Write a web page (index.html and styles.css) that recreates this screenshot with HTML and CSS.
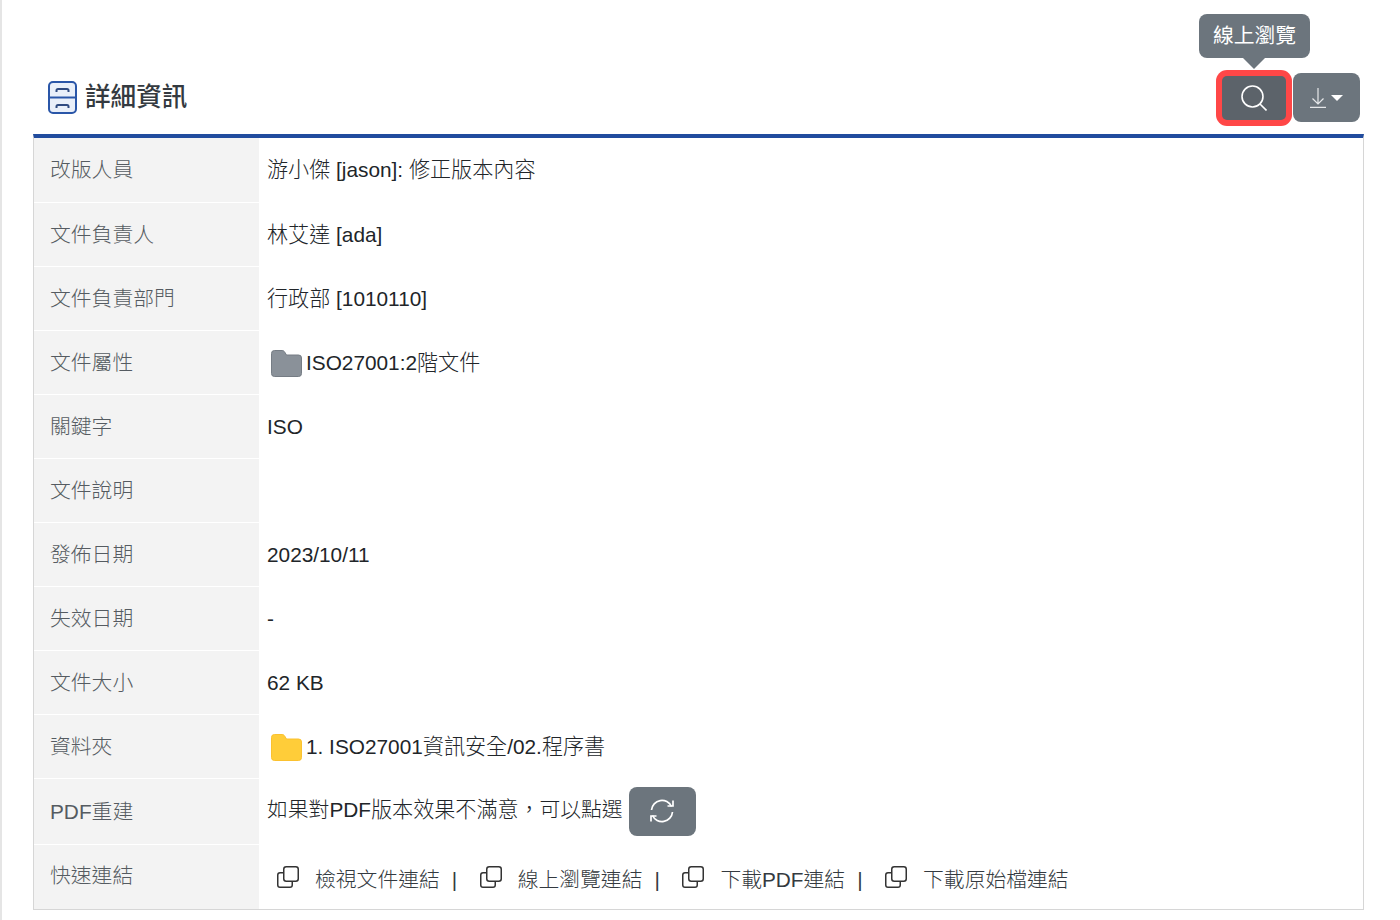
FILE: index.html
```html
<!DOCTYPE html>
<html lang="zh-Hant">
<head>
<meta charset="utf-8">
<title>詳細資訊</title>
<link rel="stylesheet" href="styles.css">
</head>
<body>
<div class="page">
  <header class="head">
    <h2 class="title">
      <svg class="title-icon" viewBox="0 0 29 33" width="29" height="33" fill="none" stroke="#2a56a8" stroke-width="2">
        <rect x="1" y="1" width="27" height="31" rx="4" fill="#e9eff9"/>
        <path d="M1 16.500h27"/>
        <path d="M8.500 11V9.500A1.500 1.500 0 0 1 10 8h9a1.500 1.500 0 0 1 1.500 1.500V11M8.500 27v-1.500A1.500 1.500 0 0 1 10 24h9a1.500 1.500 0 0 1 1.500 1.500V27" stroke="#2f4a80"/>
      </svg>
      <span>詳細資訊</span>
    </h2>
    <div class="actions">
      <div class="focus-wrap">
        <div class="tooltip">線上瀏覽</div>
        <button class="btn btn-active" type="button" aria-label="線上瀏覽">
          <svg viewBox="0 0 26 26" width="26" height="26" fill="none" stroke="#fff" stroke-width="1.600"><circle cx="11.500" cy="11.500" r="10.500"/><path d="M19 19l6.500 6.500"/></svg>
        </button>
      </div>
      <button class="btn btn-dl" type="button" aria-label="下載">
        <svg viewBox="0 0 16 20" width="16" height="20" fill="none" stroke="#e6e8ea" stroke-width="1.200"><path d="M8 0v15.500M2.500 10.500L8 16l5.500-5.500M0 19.400h16"/></svg>
        <span class="caret"></span>
      </button>
    </div>
  </header>
  <table class="info">
    <tbody>
      <tr class="row-first"><th>改版人員</th><td><span class="zh">游小傑</span> [jason]: <span class="zh">修正版本內容</span></td></tr>
      <tr><th>文件負責人</th><td><span class="zh">林艾達</span> [ada]</td></tr>
      <tr><th>文件負責部門</th><td><span class="zh">行政部</span> [1010110]</td></tr>
      <tr><th>文件屬性</th><td><div class="folder-row">
        <svg class="folder" viewBox="0 0 32 27" width="31" height="27" preserveAspectRatio="none"><path d="M.5 3.500a3 3 0 0 1 3-3h8a3 3 0 0 1 2.400 1.200L16 5h12.500a3 3 0 0 1 3 3v15.500a3 3 0 0 1-3 3h-25a3 3 0 0 1-3-3z" fill="#8a9199" stroke="#747b83"/></svg><span>ISO27001:2<span class="zh">階文件</span></span></div></td></tr>
      <tr><th>關鍵字</th><td>ISO</td></tr>
      <tr><th>文件說明</th><td></td></tr>
      <tr><th>發佈日期</th><td>2023/10/11</td></tr>
      <tr><th>失效日期</th><td>-</td></tr>
      <tr><th>文件大小</th><td>62 KB</td></tr>
      <tr><th>資料夾</th><td><div class="folder-row">
        <svg class="folder" viewBox="0 0 32 27" width="31" height="27" preserveAspectRatio="none"><path d="M.5 3.500a3 3 0 0 1 3-3h8a3 3 0 0 1 2.400 1.200L16 5h12.500a3 3 0 0 1 3 3v15.500a3 3 0 0 1-3 3h-25a3 3 0 0 1-3-3z" fill="#ffcd39" stroke="#fbc02d"/></svg><span>1. ISO27001<span class="zh">資訊安全</span>/02.<span class="zh">程序書</span></span></div></td></tr>
      <tr class="row-rebuild"><th>PDF重建</th><td><div class="rebuild">
        <span class="rebuild-text">如果對PDF<span class="zh">版本效果不滿意</span>，可以點選</span>
        <button class="btn btn-refresh" type="button" aria-label="重建">
          <svg viewBox="0 0 24 24" width="24" height="24" fill="none" stroke="#fff" stroke-width="1.700"><path d="M1.500 11A10.500 10.500 0 0 1 21.500 7.500"/><path d="M23 1.500V7h-5.500"/><path d="M22.500 13A10.500 10.500 0 0 1 2.500 16.500"/><path d="M1 22.500V17h5.500"/></svg>
        </button>
      </div></td></tr>
      <tr class="row-links"><th>快速連結</th><td><div class="links">
        <a class="link"><svg class="copy" viewBox="0 0 22 22" width="22" height="22"><use href="#copy"/></svg><span>檢視文件連結</span></a><i class="sep">|</i>
        <a class="link"><svg class="copy" viewBox="0 0 22 22" width="22" height="22"><use href="#copy"/></svg><span>線上瀏覽連結</span></a><i class="sep">|</i>
        <a class="link"><svg class="copy" viewBox="0 0 22 22" width="22" height="22"><use href="#copy"/></svg><span>下載PDF連結</span></a><i class="sep">|</i>
        <a class="link"><svg class="copy" viewBox="0 0 22 22" width="22" height="22"><use href="#copy"/></svg><span>下載原始檔連結</span></a>
      </div></td></tr>
    </tbody>
  </table>
</div>
<svg class="defs" width="0" height="0">
  <defs>
    <g id="copy" fill="none" stroke="#333" stroke-width="1.500">
      <rect x="6.750" y=".75" width="14.500" height="14.500" rx="2.500"/>
      <path d="M6.750 6.750H3a2.250 2.250 0 0 0-2.250 2.250V19A2.250 2.250 0 0 0 3 21.250h10A2.250 2.250 0 0 0 15.250 19v-3.750"/>
    </g>
  </defs>
</svg>
</body>
</html>
```
FILE: styles.css
```css
* { box-sizing: border-box; }
html, body { margin: 0; padding: 0; height: 920px; overflow: hidden; background: #fff; }
body {
  font-family: "Liberation Sans", "Noto Sans CJK TC", sans-serif;
  font-size: 20.8px;
  font-weight: 300;
  color: #212529;
  border-left: 2px solid #e5e5e5;
}
.page { padding: 0 36px 0 31px; }
.head {
  height: 134px;
  display: flex;
  justify-content: space-between;
  align-items: flex-end;
  padding: 0 4px 12px 15px;
}
.title {
  margin: 0 0 8px;
  display: flex;
  align-items: center;
  gap: 8px;
  font-size: 25.6px;
  font-weight: 500;
  color: #343a40;
  line-height: 34px;
}
.title-icon { display: block; }
.actions { display: flex; align-items: flex-end; }
.focus-wrap { position: relative; }
.btn {
  border: 0;
  border-radius: 8px;
  background: #6c757d;
  color: #fff;
  display: flex;
  align-items: center;
  justify-content: center;
  padding: 0;
}
.btn-active {
  width: 64px;
  height: 44px;
  margin: 0 7px 2px 0;
  background: #5c636a;
  box-shadow: 0 0 0 6px #ff4747;
  border-radius: 5px;
}
.btn-dl { width: 67px; height: 49px; gap: 5px; }
.caret {
  width: 0; height: 0;
  border-left: 6px solid transparent;
  border-right: 6px solid transparent;
  border-top: 6px solid #fff;
}
.tooltip {
  position: absolute;
  left: -23px;
  top: -62px;
  width: 111px;
  height: 44px;
  padding-bottom: 5px;
  border-radius: 8px;
  background: #6c757d;
  color: #fff;
  font-size: 20.8px;
  font-weight: 400;
  display: flex;
  align-items: center;
  justify-content: center;
}
.tooltip::after {
  content: "";
  position: absolute;
  left: 44px;
  top: 44px;
  border-left: 11px solid transparent;
  border-right: 11px solid transparent;
  border-top: 11px solid #6c757d;
}
.info {
  width: 1331px;
  border-collapse: separate;
  border-spacing: 0;
  table-layout: fixed;
  border-top: 4px solid #214c9e;
  border-left: 1px solid #d6d6d6;
  border-right: 1px solid #d6d6d6;
  border-bottom: 1px solid #d6d6d6;
}
.info th, .info td {
  padding: 0 8px;
  height: 64px;
  font-weight: 300;
  text-align: left;
  vertical-align: middle;
  border: 0;
  line-height: 24px;
}
.info th {
  width: 225px;
  padding-left: 16px;
  background: #f3f3f3;
  color: #555b61;
  border-bottom: 1px solid #fff;
}
.info .row-first th { height: 65px; }
.info .row-first td { height: 65px; padding-bottom: 1px; }
.info tr:last-child th { border-bottom: 0; padding-bottom: 2px; }
.zh { font-size: 21.100px; }
.info .row-rebuild th { height: 66px; }
.info .row-rebuild td { height: 66px; padding-bottom: 2px; }
.folder-row { display: flex; align-items: center; gap: 4px; padding-left: 4px; }
.folder { display: block; flex: none; }
.rebuild { display: flex; align-items: center; gap: 6px; }
.rebuild-text { padding-bottom: 3px; }
.btn-refresh { width: 67px; height: 49px; }
.links { display: flex; align-items: center; padding: 6px 0 0 10px; }
.link { display: flex; align-items: center; gap: 16px; color: #343a40; }
.copy { display: block; flex: none; margin-top: -7px; }
.sep { font-style: normal; margin: 0 22.500px 0 12px; color: #343a40; }
.defs { position: absolute; }
```
